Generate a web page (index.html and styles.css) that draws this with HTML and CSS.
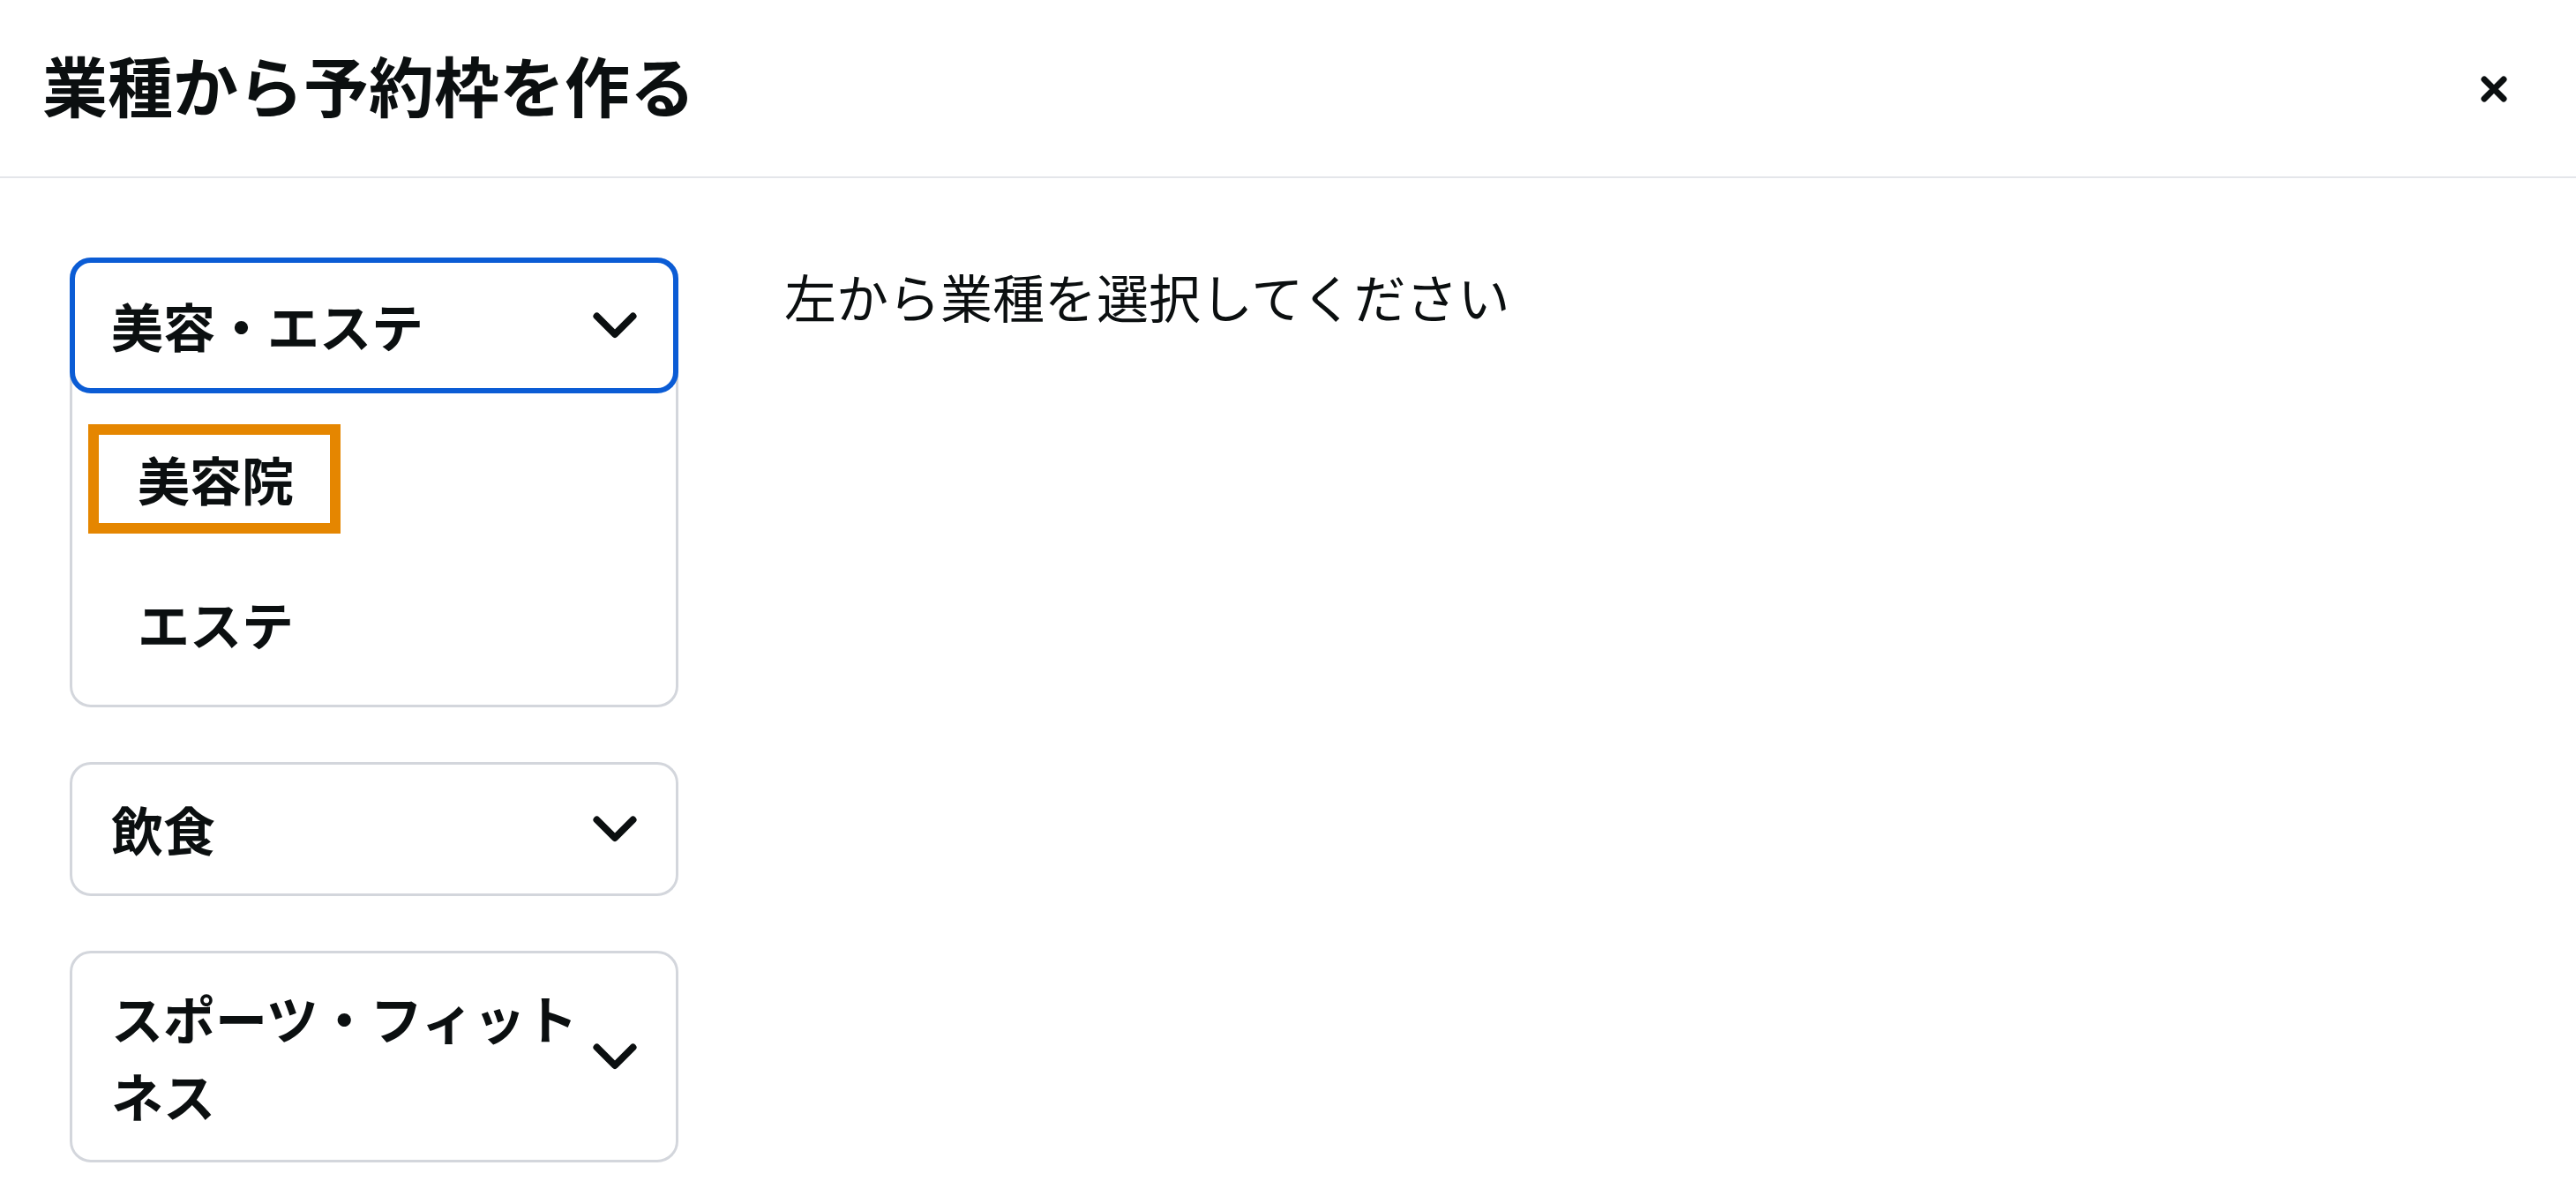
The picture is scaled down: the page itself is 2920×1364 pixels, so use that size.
FILE: index.html
```html
<!DOCTYPE html>
<html lang="ja">
<head>
<meta charset="utf-8">
<title>業種から予約枠を作る</title>
<link rel="stylesheet" href="styles.css">
</head>
<body>
<div class="dialog">
  <header class="dialog-header">
    <h1 class="dialog-title">業種から予約枠を作る</h1>
    <button class="close-btn" aria-label="閉じる">
      <svg class="close-icon" viewBox="0 0 32 32"><path d="M5 5 L27 27 M27 5 L5 27"/></svg>
    </button>
  </header>
  <main class="dialog-body">
    <div class="category-list">
      <section class="acc open">
        <button class="acc-head">
          <span class="acc-label">美容・エステ</span>
          <svg class="chevron" viewBox="0 0 50 30"><path d="M4.5 4.5 L25 25 L45.5 4.5"/></svg>
        </button>
        <div class="acc-panel">
          <a class="acc-item focused">美容院</a>
          <a class="acc-item">エステ</a>
        </div>
      </section>
      <section class="acc">
        <button class="acc-head">
          <span class="acc-label">飲食</span>
          <svg class="chevron" viewBox="0 0 50 30"><path d="M4.5 4.5 L25 25 L45.5 4.5"/></svg>
        </button>
      </section>
      <section class="acc">
        <button class="acc-head">
          <span class="acc-label">スポーツ・フィットネス</span>
          <svg class="chevron" viewBox="0 0 50 30"><path d="M4.5 4.5 L25 25 L45.5 4.5"/></svg>
        </button>
      </section>
    </div>
    <p class="placeholder">左から業種を選択してください</p>
  </main>
</div>
</body>
</html>
```
FILE: styles.css
```css
html, body {
  margin: 0;
  padding: 0;
  background: #ffffff;
}
body {
  font-family: "Noto Sans CJK JP", "Noto Sans", sans-serif;
  color: #0b0f10;
}
.dialog-header {
  height: 200px;
  display: flex;
  align-items: center;
  justify-content: space-between;
  padding: 0 61px 0 48px;
  border-bottom: 2px solid #e4e6ea;
}
.dialog-title {
  margin: 0 0 10px 0;
  font-size: 74px;
  font-weight: 700;
  line-height: 1.2;
}
.close-btn {
  width: 64px;
  height: 64px;
  padding: 0;
  margin-top: 2px;
  border: none;
  background: none;
  display: flex;
  align-items: center;
  justify-content: center;
}
.close-icon {
  width: 32px;
  height: 32px;
  fill: none;
  stroke: #0b0f10;
  stroke-width: 7;
  stroke-linecap: round;
}
.dialog-body {
  display: grid;
  grid-template-columns: 690px 1fr;
  column-gap: 120px;
  align-items: start;
  padding: 90px 79px 0 79px;
}
.category-list {
  display: flex;
  flex-direction: column;
  gap: 62px;
}
.acc {
  border: 3px solid #d3d6dc;
  border-radius: 24px;
  background: #fff;
}
.acc-head {
  width: 100%;
  display: flex;
  align-items: center;
  gap: 8px;
  padding: 29px 44px;
  border: none;
  background: none;
  font: inherit;
  color: inherit;
  text-align: left;
  font-size: 59px;
  font-weight: 700;
  line-height: 88px;
  box-sizing: border-box;
}
.acc-label {
  flex: 1;
  min-width: 0;
}
.acc.open .acc-head {
  width: calc(100% + 6px);
  margin: -3px -3px 0 -3px;
  padding: 27px 41px;
  border: 6px solid #0b5cd5;
  border-radius: 24px;
}
.chevron {
  flex: none;
  width: 50px;
  height: 30px;
  fill: none;
  stroke: #0b0f10;
  stroke-width: 8;
  stroke-linecap: round;
  stroke-linejoin: round;
}
.acc-panel {
  display: flex;
  flex-direction: column;
  align-items: flex-start;
  gap: 64px;
  padding: 47px 0 42px 30px;
}
.acc-item {
  display: block;
  padding: 6px 41px 6px 44px;
  font-size: 59px;
  font-weight: 700;
  line-height: 88px;
  color: #0b0f10;
}
.acc-item.focused {
  outline: 12px solid #e58600;
}
.placeholder {
  margin: 0;
  font-size: 59px;
  font-weight: 400;
  line-height: 88px;
}
```
